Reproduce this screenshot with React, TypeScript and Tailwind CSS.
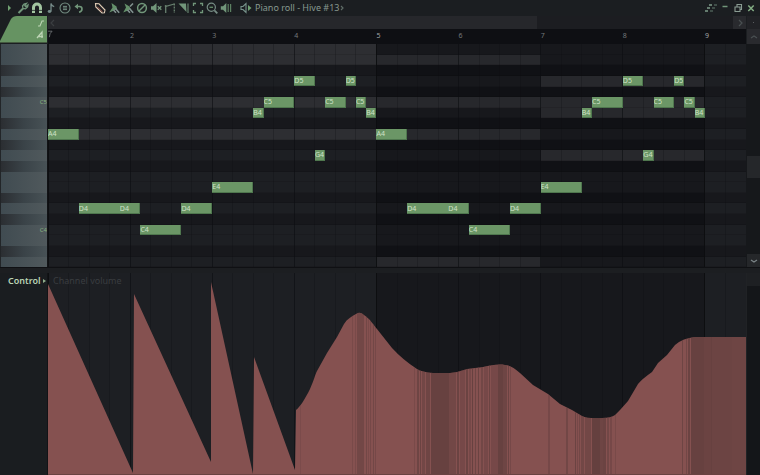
import type { ReactNode } from 'react';

interface Note {
  pitch: string;
  start: number; // in eighths of a bar
  len:   number;
}

interface Tool {
  label: string;
  icon:  ReactNode;
}

const PITCHES = [
  'F5', 'E5', 'D#5', 'D5', 'C#5', 'C5', 'B4', 'A#4', 'A4', 'G#4', 'G4',
  'F#4', 'F4', 'E4', 'D#4', 'D4', 'C#4', 'C4', 'B3', 'A#3', 'A3',
];

const BARS  = 8.5;
const STEPS = BARS * 8;

const PHRASE: Note[] = [
  { pitch: 'A4', start: 0,  len: 3 },
  { pitch: 'D4', start: 3,  len: 4 },
  { pitch: 'D4', start: 7,  len: 2 },
  { pitch: 'C4', start: 9,  len: 4 },
  { pitch: 'D4', start: 13, len: 3 },
  { pitch: 'E4', start: 16, len: 4 },
  { pitch: 'B4', start: 20, len: 1 },
  { pitch: 'C5', start: 21, len: 3 },
  { pitch: 'D5', start: 24, len: 2 },
  { pitch: 'G4', start: 26, len: 1 },
  { pitch: 'C5', start: 27, len: 2 },
  { pitch: 'D5', start: 29, len: 1 },
  { pitch: 'C5', start: 30, len: 1 },
  { pitch: 'B4', start: 31, len: 1 },
];

// The phrase plays twice, four bars apart
const NOTES = [...PHRASE, ...PHRASE.map(n => ({ ...n, start: n.start + 32 }))];

const SECTIONS = [
  { bars: 4,        white: '#1d1f23', black: '#17181c', lit: '#2d2e32', on: ['F5', 'E5', 'C5', 'A4'] },
  { bars: 2,        white: '#17181c', black: '#101115', lit: '#27282c', on: ['E5', 'C5', 'A4', 'A3'] },
  { bars: 2,        white: '#17181c', black: '#101115', lit: '#27282c', on: ['D5', 'C5', 'B4', 'G4'] },
  { bars: BARS - 8, white: '#1d1f23', black: '#17181c', lit: '#2d2e32', on: [] as string[] },
];

const CURVE =
  'M0 202 V11 L85 200 L86 21 L163 189 L163 9 L205 201 L206 84 L247 197 L248 137 ' +
  'C252 134 257 126 262 116 C266 107 267 102 269 98 L279 80 L289 64 L296 51 C299 46 304 43 308 41 ' +
  'Q312 38 316 42 C322 46 325 51 329 56 L344 75 Q355 87 369 96 Q374 99 385 100 H402 ' +
  'Q411 99 419 96 L435 94 C443 92 451 91 457 92 Q463 92 472 100 L485 112 L500 121 L512 131 L524 137 ' +
  'L534 143 Q540 146 554 145 Q563 145 567 142 L572 137 L580 128 L590 111 Q594 106 604 99 ' +
  'L610 90 L619 82 L627 72 Q635 65 647 64 H698 V202 Z';

// Dense automation points read as darker bands: x, width, opacity
const BANDS = [
  [252, 1, 0.25], [304, 1, 0.3], [307, 1, 0.3], [309, 7, 0.5], [318, 1, 0.5], [320, 1, 0.3], [322, 1, 0.4],
  [325, 1, 0.5], [327, 1, 0.4], [366, 1, 0.3], [369, 2, 0.6], [372, 1, 0.7], [374, 3, 0.5], [378, 4, 0.6],
  [383, 18, 0.8], [401, 7, 0.5], [409, 2, 0.7], [412, 5, 0.4], [418, 2, 0.7], [421, 2, 0.4], [424, 1, 0.8],
  [427, 1, 0.6], [430, 1, 0.7], [433, 2, 0.5], [436, 4, 0.4], [441, 1, 0.7], [443, 7, 0.4], [450, 5, 0.8],
  [455, 4, 0.6], [460, 1, 0.7], [462, 1, 0.4], [500, 2, 0.4], [518, 2, 0.5], [527, 1, 0.7], [529, 1, 0.4],
  [531, 1, 0.5], [533, 3, 0.5], [537, 6, 0.5], [544, 8, 0.85], [552, 3, 0.6], [555, 3, 0.7], [559, 2, 0.5],
  [562, 2, 0.4], [567, 1, 0.3], [634, 1, 0.6], [638, 1, 0.5], [640, 2, 0.7], [643, 13, 0.8], [656, 7, 0.7],
  [663, 1, 0.8], [664, 20, 0.65], [684, 14, 0.6],
];

function Svg({ children, className = 'text-[#71967a]' }: { children: ReactNode; className?: string }) {
  return (
    <svg viewBox="0 0 12 12" className={`h-3 w-3 shrink-0 ${className}`} fill="none" stroke="currentColor" strokeWidth="1.3">
      {children}
    </svg>
  );
}

const MENU_TOOLS: Tool[] = [
  { label: 'Tools', icon: <Svg><path d="M1.5 11 L6 6.5" strokeWidth="2" /><path d="M9.5 1.4 L7 2 L5.5 4 L6 6.5 L8.5 6.8 L10.6 5 L11 3 L8.8 4.6 L7.8 3.6 Z" /></Svg> },
  { label: 'Snap', icon: <Svg className="text-[#a3c6a1]"><path d="M2.5 11 V5.5 A3.5 3.5 0 0 1 9.5 5.5 V11" strokeWidth="3" /><path d="M1 8.4 H4 M8 8.4 H11" stroke="#1c1f22" strokeWidth="0.8" /></Svg> },
  { label: 'Stamp', icon: <Svg className="text-[#778d8b]"><path d="M6 9.5 V1.5 Q6.5 4 9.2 4.6" /><ellipse cx="4.5" cy="9.5" rx="1.8" ry="1.4" fill="currentColor" stroke="none" /></Svg> },
  { label: 'View', icon: <Svg className="text-[#728b80]"><circle cx="6" cy="6" r="5" strokeWidth="1.1" /><path d="M4 4.4 H8 M4 6 H8 M4 7.6 H8" strokeWidth="1" /></Svg> },
  { label: 'Undo', icon: <Svg><path d="M4 4.5 H6.5 Q9 4.5 9 7 Q9 9.6 6 10.2" strokeWidth="1.6" /><path d="M1.5 4.5 L5 1.7 V7.3 Z" fill="currentColor" stroke="none" /></Svg> },
];

const DRAW_TOOLS: Tool[] = [
  { label: 'Draw', icon: <Svg className="text-[#e0ccb6]"><path d="M1.5 1.5 L5 1.8 L11 8 L10.4 10.8 L8 11 L1.8 5 Z" strokeWidth="1.1" /><path d="M3.2 4.6 L8.4 9.8" stroke="#a95d50" strokeWidth="1" /><path d="M4.2 3.4 L9.4 8.6" stroke="#2a2426" strokeWidth="1" /></Svg> },
  { label: 'Paint', icon: <Svg className="text-[#64906a]"><path d="M3.5 1 L8.5 4.5 L9 7 L6 8.5 L1.2 10.5 L4.5 5.5 Z" fill="currentColor" stroke="none" /><path d="M7.5 6.5 L11.2 10.8 M5.5 8 L8 10.8" stroke="#80918f" strokeWidth="1.6" /></Svg> },
  { label: 'Paint drum sequences', icon: <Svg className="text-[#64906a]"><path d="M2.5 1.5 L7.5 4.5 L8.5 7 L6 8.5 L1.2 10.5 L4 5.5 Z" fill="currentColor" stroke="none" /><path d="M7.5 6.5 L11.2 10.8 M8 4.5 L11 1.5 M5.5 8 L8 10.8" stroke="#80918f" strokeWidth="1.6" /></Svg> },
  { label: 'Delete', icon: <Svg><circle cx="6" cy="6" r="4.4" strokeWidth="1.5" /><path d="M3 9 L9 3" strokeWidth="1.5" /></Svg> },
  { label: 'Mute', icon: <Svg><path d="M1 4.2 H3 L6.5 1 V11 L3 7.8 H1 Z" fill="currentColor" stroke="none" /><path d="M7.8 4.3 L11.3 7.8 M11.3 4.3 L7.8 7.8" /></Svg> },
  { label: 'Slip', icon: <Svg className="text-[#68806f]"><path d="M1.7 11 V4.5 L10.3 2" /><path d="M10.3 1.5 V11" strokeDasharray="2 1" /><circle cx="1.7" cy="4" r="1" fill="currentColor" stroke="none" /></Svg> },
  { label: 'Slice', icon: <Svg><path d="M0.5 1.5 H8 L8.5 10 Z" fill="currentColor" stroke="none" /><path d="M10 1.5 V11" stroke="#52695b" strokeWidth="1.6" /></Svg> },
  { label: 'Select', icon: <Svg><path d="M1.5 4 V1.5 H4 M8 1.5 H10.5 V4 M10.5 8 V10.5 H8 M4 10.5 H1.5 V8" /></Svg> },
  { label: 'Zoom', icon: <Svg className="text-[#778d85]"><circle cx="5.3" cy="5.3" r="4.1" strokeWidth="1.2" /><path d="M8.4 8.4 L11.3 11.3" strokeWidth="1.8" /><path d="M3.5 5.3 H7" className="text-[#668f6b]" stroke="currentColor" /></Svg> },
  { label: 'Playback', icon: <Svg><path d="M0.8 4.2 H3 L6.3 1 V11 L3 7.8 H0.8 Z" fill="currentColor" stroke="none" /><path d="M8.2 2 V10 M10.6 2 V10" stroke="#5c8062" strokeWidth="1.2" /></Svg> },
];

function ToolButton({ label, icon }: Tool) {
  return (
    <button aria-label={label} className="flex w-[14px] items-center justify-center">
      {icon}
    </button>
  );
}

function Chevron({ d, className = 'text-[#4a5052]' }: { d: string; className?: string }) {
  return (
    <svg viewBox="0 0 8 8" className={`h-2 w-2 ${className}`} fill="none" stroke="currentColor" strokeWidth="1.2">
      <path d={d} />
    </svg>
  );
}

function TitleBar() {
  return (
    <header className="flex h-4 shrink-0 items-center bg-[#1b1e21]">
      <button aria-label="Menu" className="flex w-4 justify-center pl-1">
        <svg viewBox="0 0 8 8" className="h-2 w-2 text-[#71a172]"><path d="M2 1 L5 4 L2 7 Z" fill="currentColor" /></svg>
      </button>
      <div className="flex">{MENU_TOOLS.map(t => <ToolButton key={t.label} {...t} />)}</div>
      <div className="ml-[7px] flex">{DRAW_TOOLS.map(t => <ToolButton key={t.label} {...t} />)}</div>
      <div className="ml-[7px] flex items-center">
        <Svg className="text-[#76928a]">
          <path d="M1 4.5 V7.5 H3 L6 10.5 V1.5 L3 4.5 Z" strokeWidth="1.1" />
          <path d="M8 3 L11.5 6 L8 9 Z" fill="#6ea072" stroke="none" />
        </Svg>
        <h1 className="ml-[3px] text-[9px] leading-4 text-[#88998f]">Piano roll - Hive #13</h1>
        <Chevron d="M2 2 L4 4 L2 6" className="text-[#5e6b66]" />
      </div>
      <div className="ml-auto flex items-center pr-[3px]">
        <button aria-label="Ghost channels" className="flex w-[14px] justify-center">
          <Svg className="text-[#7d9a88]"><path d="M4 3 H7 M2 6 H5 M0 9 H3" strokeWidth="1.3" /><path d="M9 3 H12 M7 6 H10 M5 9 H8" stroke="#4c5d56" strokeWidth="1.3" /></Svg>
        </button>
        <button aria-label="Minimize" className="flex w-[13px] justify-center">
          <Svg><path d="M3.5 4.5 H8.5" strokeWidth="1.5" /></Svg>
        </button>
        <button aria-label="Restore" className="flex w-[13px] justify-center">
          <Svg className="text-[#8a9c93]"><path d="M3 5 H8 V9.5 H3 Z M5 4.5 V2.5 H9.5 V7.5 H8.5" strokeWidth="1.1" /></Svg>
        </button>
        <button aria-label="Close" className="flex w-[13px] justify-center">
          <Svg className="text-[#83ad84]"><path d="M3.3 3.5 L8.7 9 M8.7 3.5 L3.3 9" strokeWidth="1.5" /></Svg>
        </button>
      </div>
    </header>
  );
}

function Ruler() {
  return (
    <div className="flex h-7 shrink-0 bg-[#1b1e21]">
      <div className="w-12 pr-px">
        <svg viewBox="0 0 47 28" className="h-full w-full" preserveAspectRatio="none">
          <path d="M0 26 V25 L11 3 Q13 0 17 0 H47 V26 Z" fill="#669362" />
          <path d="M0 26.5 H47" stroke="#43583f" />
          <path d="M38 10 H40 L42 5 H44" fill="none" stroke="#bcd4b4" strokeWidth="1.1" />
          <path d="M37 22 L42 16 V22 M38.5 20.5 H43" fill="none" stroke="#bcd4b4" strokeWidth="1.3" />
        </svg>
      </div>
      <div className="flex min-w-0 grow flex-col">
        <div className="flex h-[13px] items-center justify-between bg-[#1c1d21]">
          <div className="flex h-full w-[70%] items-center bg-[#26272b] pl-px">
            <button aria-label="Scroll left"><Chevron d="M5 1 L2 4 L5 7" className="text-[#3b3e41]" /></button>
          </div>
          <button aria-label="Scroll right" className="flex h-full w-[13px] items-center justify-center bg-[#292a2e]">
            <Chevron d="M3 1 L6 4 L3 7" />
          </button>
        </div>
        <div className="flex grow overflow-hidden bg-[#0e0f13] text-[7px] leading-[14px]">
          {Array.from({ length: 9 }, (_, i) => (
            <span
              key={i}
              className={`shrink-0 ${i % 4 === 0 ? 'text-[#a0a3a4]' : 'text-[#74787a]'}`}
              style={{ width: `${100 / BARS}%` }}
            >
              {i === 0 ? (
                <svg viewBox="0 0 6 10" className="mt-px h-2 w-[5px]" fill="none" stroke="#777b7e">
                  <path d="M0 1.5 H5 L2.5 4.5 L1.5 9" />
                </svg>
              ) : i + 1}
            </span>
          ))}
        </div>
      </div>
      <div className="flex w-[14px] flex-col pl-px">
        <div className="flex h-[13px] items-center justify-center bg-[#212226]"><i className="h-px w-px bg-[#5a5d60]" /></div>
        <button aria-label="Scroll up" className="flex grow items-center justify-center bg-[#292a2e]">
          <Chevron d="M1 5 L4 3 L7 5" />
        </button>
      </div>
    </div>
  );
}

function Keys() {
  return (
    <div className="flex w-12 shrink-0 flex-col border-r border-[#121316] bg-[#222528] pl-px">
      {PITCHES.map(p => (
        <div
          key={p}
          className={`flex min-h-0 grow basis-0 items-center justify-end overflow-hidden text-[6px] leading-none text-[#86b07e] ${
            p.includes('#')
              ? 'bg-linear-to-r from-[#2b2e32] via-[#3a4348] to-[#485256]'
              : 'bg-linear-to-r from-[#404b51] to-[#50595c]'
          }`}
        >
          {p[0] === 'C' && !p.includes('#') ? p : null}
        </div>
      ))}
    </div>
  );
}

function GridLines() {
  return (
    <svg className="absolute inset-0 h-full w-full" aria-hidden="true" shapeRendering="crispEdges">
      {Array.from({ length: 34 }, (_, i) => (
        <line
          key={i}
          x1={`${(i * 25) / BARS}%`}
          x2={`${(i * 25) / BARS}%`}
          y1="0"
          y2="100%"
          stroke="#0c0d10"
          strokeOpacity={i % 16 === 0 ? 0.9 : i % 4 === 0 ? 0.6 : 0.25}
        />
      ))}
    </svg>
  );
}

function NoteGrid() {
  const rowPct = 100 / PITCHES.length;

  return (
    <div className="relative flex min-w-0 grow overflow-hidden">
      {SECTIONS.map((s, i) => (
        <div key={i} className="flex flex-col" style={{ width: `${(s.bars / BARS) * 100}%` }}>
          {PITCHES.map(p => (
            <div
              key={p}
              className="min-h-0 grow basis-0 border-b border-black/10"
              style={{ backgroundColor: s.on.includes(p) ? s.lit : p.includes('#') ? s.black : s.white }}
            />
          ))}
        </div>
      ))}
      <GridLines />
      {NOTES.map(n => (
        <div
          key={n.start}
          className={`absolute flex items-center overflow-hidden border-b border-[#4f774e] bg-[#6b9666] text-[7px] leading-none text-[#cfe2c8] ${
            n.start % 32 === 3 ? '' : 'border-r'
          }`}
          style={{
            left:   `${(n.start / STEPS) * 100}%`,
            top:    `${PITCHES.indexOf(n.pitch) * rowPct}%`,
            width:  `${(n.len / STEPS) * 100}%`,
            height: `${rowPct}%`,
          }}
        >
          {n.pitch}
        </div>
      ))}
    </div>
  );
}

function ControlLane() {
  return (
    <div className="flex min-h-0 grow-[202] basis-0">
      <div className="flex w-12 shrink-0 items-start border-r border-[#121316] bg-[#1a1d20] pl-2">
        <button className="flex items-center text-[9px] leading-4 font-semibold text-[#b9d3b4]">
          Control
          <svg viewBox="0 0 6 8" className="h-2 w-[6px] shrink-0 text-[#8fae8b]"><path d="M2 2 L5 4 L2 6 Z" fill="currentColor" /></svg>
        </button>
      </div>
      <div className="relative min-w-0 grow">
        <div className="absolute inset-0 flex">
          {SECTIONS.map((s, i) => (
            <div key={i} style={{ width: `${(s.bars / BARS) * 100}%`, backgroundColor: s.white }} />
          ))}
        </div>
        <GridLines />
        <span className="absolute top-0 left-[5px] text-[9px] leading-4 text-[#3a3d40]">Channel volume</span>
        <svg viewBox="0 0 698 202" preserveAspectRatio="none" className="absolute inset-0 h-full w-full" role="img" aria-label="Channel volume automation">
          <clipPath id="volume"><path d={CURVE} /></clipPath>
          <path d={CURVE} fill="#855150" />
          <g clipPath="url(#volume)">
            {BANDS.map(([x, w, o]) => (
              <rect key={x} x={x} y="0" width={w} height="202" fill="#5f3d3c" opacity={o} />
            ))}
            <path d="M0 201.5 H698" stroke="#6a4241" />
          </g>
        </svg>
      </div>
      <div className="w-[14px] shrink-0 border-l border-[#202225] bg-[#141619]">
        <div className="h-[13px] bg-[#1e2023]" />
      </div>
    </div>
  );
}

export default function App() {
  return (
    <main className="flex h-screen flex-col overflow-hidden bg-[#1a1d20] font-['Noto_Sans','Open_Sans',sans-serif]">
      <TitleBar />
      <Ruler />
      <div className="flex min-h-0 grow-[223] basis-0">
        <Keys />
        <NoteGrid />
        <div className="flex w-[14px] shrink-0 flex-col bg-[#16181b] pl-px">
          <div className="grow" />
          <div className="h-[10%] bg-[#25272a]" />
          <div className="grow-[0.68] basis-0" />
          <button aria-label="Scroll down" className="flex h-[13px] items-center justify-center bg-[#25272a]">
            <Chevron d="M1 3 L4 5 L7 3" className="text-[#7b8588]" />
          </button>
        </div>
      </div>
      <div className="h-[6px] shrink-0 border-t border-[#0f1013] bg-[#1c1e21]" />
      <ControlLane />
    </main>
  );
}
